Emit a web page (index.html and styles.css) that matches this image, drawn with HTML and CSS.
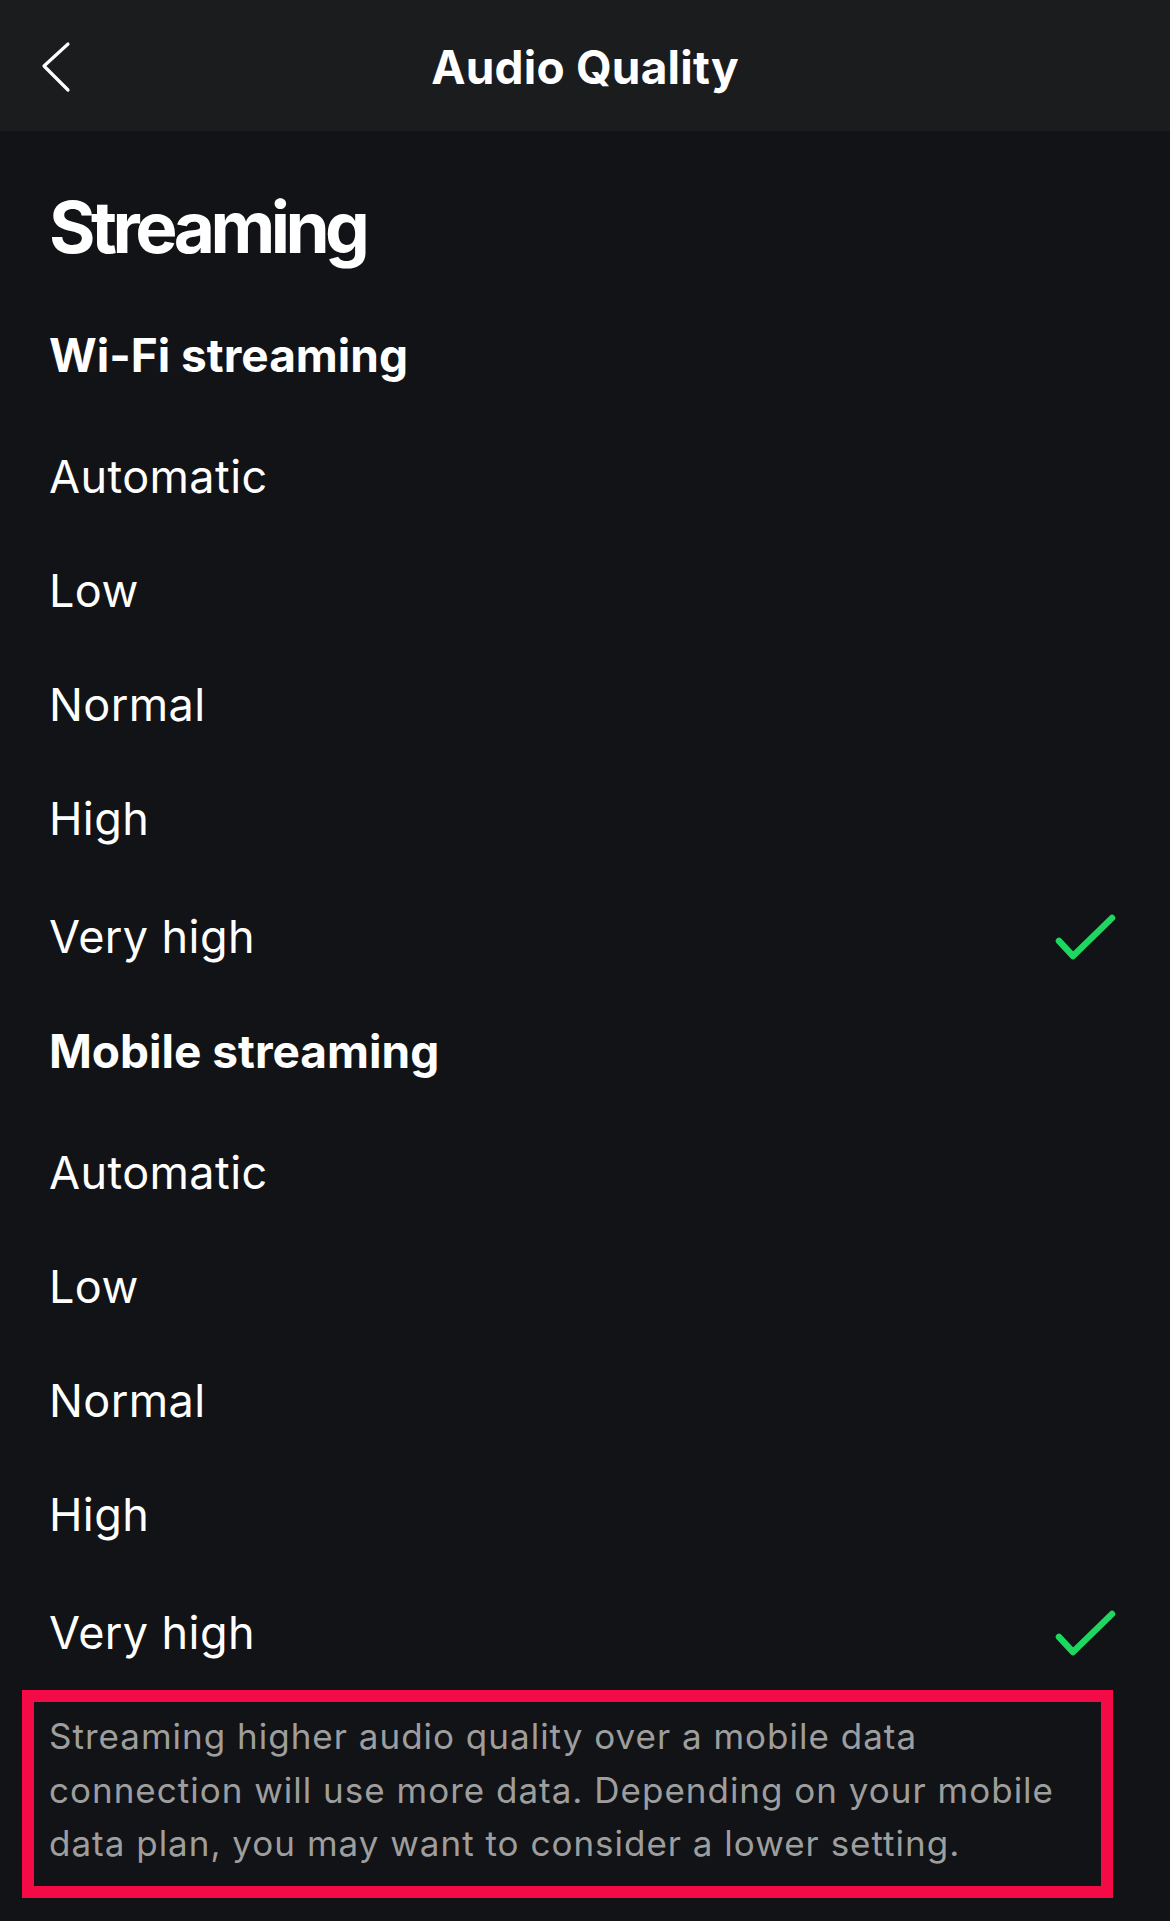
FILE: index.html
```html
<!DOCTYPE html>
<html lang="en">
<head>
<meta charset="utf-8">
<title>Audio Quality</title>
<link rel="stylesheet" href="styles.css">
</head>
<body>
<header class="topbar">
  <button class="back" aria-label="Back">
    <svg width="36" height="56" viewBox="0 0 36 56"><polyline points="27,4 3,26 27,50" fill="none" stroke="#fff" stroke-width="3.2" stroke-linecap="round" stroke-linejoin="round"/></svg>
  </button>
  <h1 class="topbar-title">Audio Quality</h1>
</header>
<main class="page">
  <h2 class="section-title">Streaming</h2>

  <h3 class="group-title group-wifi">Wi-Fi streaming</h3>
  <ul class="options">
    <li class="option">Automatic</li>
    <li class="option">Low</li>
    <li class="option">Normal</li>
    <li class="option">High</li>
    <li class="option selected">Very high
      <svg class="check" width="67" height="52" viewBox="0 0 67 52"><polyline points="7,30 21,45 60,7" fill="none" stroke="#1ed760" stroke-width="6.5" stroke-linecap="round" stroke-linejoin="round"/></svg>
    </li>
  </ul>

  <h3 class="group-title group-mobile">Mobile streaming</h3>
  <ul class="options">
    <li class="option">Automatic</li>
    <li class="option">Low</li>
    <li class="option">Normal</li>
    <li class="option">High</li>
    <li class="option selected">Very high
      <svg class="check" width="67" height="52" viewBox="0 0 67 52"><polyline points="7,30 21,45 60,7" fill="none" stroke="#1ed760" stroke-width="6.5" stroke-linecap="round" stroke-linejoin="round"/></svg>
    </li>
  </ul>

  <p class="note">Streaming higher audio quality over a mobile data connection will use more data. Depending on your mobile data plan, you may want to consider a lower setting.</p>
</main>
</body>
</html>
```

FILE: styles.css
```css
* { box-sizing: border-box; }

html, body {
  margin: 0;
  padding: 0;
  background: #121316;
  color: #ffffff;
  font-family: Inter, "Noto Sans", "Liberation Sans", sans-serif;
}

body {
  width: 1170px;
  min-height: 1921px;
}

.topbar {
  height: 131px;
  background: #1b1c1e;
  display: flex;
  align-items: center;
  justify-content: center;
  position: relative;
}

.back {
  position: absolute;
  left: 41px;
  top: 40px;
  padding: 0;
  margin: 0;
  border: 0;
  background: none;
  width: 36px;
  height: 56px;
  display: block;
}

.topbar-title {
  margin: 0;
  padding-top: 4px;
  font-size: 46px;
  font-weight: 700;
  line-height: 127px;
  letter-spacing: 0.2px;
}

.page {
  padding: 0 51px 0 49px;
}

.section-title {
  margin: 48px 0 0;
  font-size: 71px;
  font-weight: 700;
  line-height: 96px;
  letter-spacing: -4.5px;
}

.group-title {
  margin: 0;
  font-size: 46px;
  font-weight: 700;
  line-height: 114px;
}

.group-wifi {
  margin-top: 23px;
  margin-bottom: 8px;
}

.group-mobile {
  margin-top: 0;
  margin-bottom: 8px;
}

.options {
  list-style: none;
  margin: 0;
  padding: 0;
}

.option {
  height: 114px;
  line-height: 114px;
  font-size: 45px;
  font-weight: 400;
  letter-spacing: 0.4px;
  display: flex;
  align-items: center;
  justify-content: space-between;
}

.option.selected {
  margin-top: 4px;
}

.check {
  display: block;
}

.note {
  margin: 0 0 0 -27px;
  width: 1091px;
  border: 12px solid #f50a48;
  padding: 8px 30px 15px 15px;
  font-size: 35px;
  line-height: 53.5px;
  letter-spacing: 1px;
  color: #9e9e9e;
}
```
